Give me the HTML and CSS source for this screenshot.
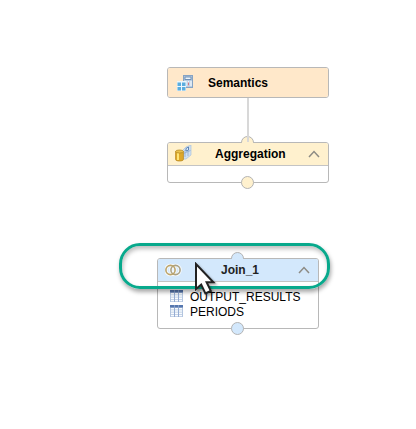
FILE: index.html
```
<!DOCTYPE html>
<html lang="en">
<head>
<meta charset="utf-8">
<title>Calculation view</title>
<link rel="stylesheet" href="styles.css">
</head>
<body>
<main class="canvas">
  <span class="connector"></span>
  <section class="node semantics">
    <header class="node-head">
      <svg class="icon" width="18" height="18" viewBox="0 0 18 18">
        <rect x="6.5" y="1.5" width="9" height="12" fill="#b9cde2" stroke="#86a3c4"/>
        <rect x="8" y="3" width="6" height="2.5" fill="#edf5fc" stroke="#587da9" stroke-width=".8"/>
        <path d="M9 7v5M11.5 7v5M14 7v5" stroke="#f1f6fa" stroke-width="1.3"/>
        <path d="M11.5 8.5v3" stroke="#cf7982"/>
        <path d="M0 7h9v10H0z" fill="#edf7fd"/>
        <path d="M.5 8.5H4V12H.5zM5 8.5h3.5V12H5zM.5 13H4v3.5H.5zM5 13h3.5v3.5H5z" fill="#5badde"/>
      </svg>
      <span class="name">Semantics</span>
    </header>
  </section>

  <section class="node aggregation">
    <i class="port top"></i>
    <header class="node-head">
      <svg class="icon" width="18" height="18" viewBox="0 0 18 18">
        <path d="M7 6l4-4 5-2v10l-5 4H7z" fill="#d0e0f0" stroke="#a9c2dc" stroke-width=".7"/>
        <path d="M10 5v7M13 5v6M8.5 8.5l7-3" stroke="#8eacd0" stroke-width=".8"/>
        <path d="M11 3.5l2.5-1.5v3L11 6z" fill="#e8f2fb" stroke="#5a83b4"/>
        <path d="M.6 6.5v8c0 2 7.8 2 7.8 0v-8z" fill="#dea82a" stroke="#b98a25" stroke-width=".8"/>
        <path d="M3 8v7" stroke="#ffe477" stroke-width="2"/>
        <ellipse cx="4.5" cy="6.5" rx="3.9" ry="1.5" fill="#e9c04e" stroke="#b68a20" stroke-width=".8"/>
      </svg>
      <span class="name">Aggregation</span>
      <svg class="chevron" width="12" height="8" viewBox="0 0 12 8"><path d="M1 7l5-5.5L11 7"/></svg>
    </header>
    <i class="port bottom"></i>
  </section>

  <section class="node join">
    <i class="port top"></i>
    <header class="node-head">
      <svg class="icon" width="18" height="14" viewBox="0 0 18 14">
        <g fill="none" stroke="#fff" stroke-width="3.4" opacity=".8"><circle cx="5.5" cy="7" r="4.6"/><circle cx="10.5" cy="7" r="4.6"/></g>
        <g fill="none" stroke-width="1.6"><circle cx="10.5" cy="7" r="4.6" stroke="#aaa285"/><circle cx="5.5" cy="7" r="4.6" stroke="#bca46a"/></g>
      </svg>
      <span class="name">Join_1</span>
      <svg class="chevron" width="12" height="8" viewBox="0 0 12 8"><path d="M1 7l5-5.5L11 7"/></svg>
    </header>
    <ul class="sources">
      <li>
        <svg width="13" height="12" viewBox="0 0 13 12"><path d="M0 0h13v12H0z" fill="#b3c5df"/><path d="M0 0h13v2.5H0z" fill="#5576ae"/><path d="M1 3h3v1.5H1zm4 0h3v1.5H5zm4 0h3v1.5H9zM1 5.3h3v1.5H1zm4 0h3v1.5H5zm4 0h3v1.5H9zM1 7.5h3V9H1zm4 0h3V9H5zm4 0h3V9H9zM1 9.8h3v1.5H1zm4 0h3v1.5H5zm4 0h3v1.5H9z" fill="#f8fbfe"/><path d="M4.5 0v12M8.5 0v12" stroke="#8ba6cf" stroke-width=".8"/></svg>
        <span>OUTPUT_RESULTS</span>
      </li>
      <li>
        <svg width="13" height="12" viewBox="0 0 13 12"><path d="M0 0h13v12H0z" fill="#b3c5df"/><path d="M0 0h13v2.5H0z" fill="#5576ae"/><path d="M1 3h3v1.5H1zm4 0h3v1.5H5zm4 0h3v1.5H9zM1 5.3h3v1.5H1zm4 0h3v1.5H5zm4 0h3v1.5H9zM1 7.5h3V9H1zm4 0h3V9H5zm4 0h3V9H9zM1 9.8h3v1.5H1zm4 0h3v1.5H5zm4 0h3v1.5H9z" fill="#f8fbfe"/><path d="M4.5 0v12M8.5 0v12" stroke="#8ba6cf" stroke-width=".8"/></svg>
        <span>PERIODS</span>
      </li>
    </ul>
    <i class="port bottom"></i>
  </section>

  <div class="highlight"></div>
  <svg class="cursor" width="24" height="36" viewBox="0 0 24 36">
    <path d="M2 2v25l5.2-4.4 4.2 8.8 5.4-2.5-4.2-8.7h6.8z" fill="#fff" stroke="#222" stroke-width="2"/>
  </svg>
</main>
</body>
</html>
```
FILE: styles.css
```
* { box-sizing: border-box; }

body {
  margin: 0;
  background: #fff;
  font-family: "Liberation Sans", Arial, sans-serif;
  font-size: 12px;
  color: #000;
}

.canvas {
  position: relative;
  width: 416px;
  height: 429px;
  overflow: hidden;
}

.connector {
  position: absolute;
  left: 247px;
  top: 98px;
  width: 2px;
  height: 44px;
  background: #d8d8d8;
  z-index: 1;
}

.node {
  position: absolute;
  width: 162px;
  border: 1px solid #b8b8b8;
  border-radius: 3px;
  background: #fff;
}

.semantics { left: 167px; top: 67px; height: 31px; }
.aggregation { left: 167px; top: 142px; height: 41px; }
.join { left: 157px; top: 258px; height: 71px; }

.node-head {
  position: relative;
  display: flex;
  align-items: center;
  height: 23px;
  padding: 0 8px 0 7px;
  border-bottom: 1px solid #c4c4c4;
  border-radius: 2px 2px 0 0;
}

.semantics .node-head {
  height: 29px;
  padding-left: 9px;
  border-bottom: 0;
  border-radius: 2px;
  background: #ffe8ca;
}
.aggregation .node-head { background: #fff1ce; }
.join .node-head { background: #d3e8fc; }

.icon { flex: none; }

.name {
  flex: 1;
  font-weight: bold;
  white-space: nowrap;
}
.semantics .name { padding-left: 13px; padding-top: 1px; }
.aggregation .name { padding-left: 22px; }
.join .name { padding-left: 38px; color: #222; }

.chevron {
  flex: none;
  fill: none;
  stroke: #8d8b84;
  stroke-width: 1.5;
}

.port {
  position: absolute;
  left: 73px;
  width: 13px;
  height: 13px;
  border: 1px solid #b4b4b4;
  border-radius: 50%;
  background: #fff1ce;
}
.join .port { background: #d3e8fc; }
.port.top { top: -7px; }
.port.bottom { bottom: -7px; }

.sources {
  list-style: none;
  margin: 0;
  padding: 7px 0 0 12px;
}
.sources li {
  display: flex;
  align-items: center;
  gap: 7px;
  height: 15px;
}
.sources svg { flex: none; position: relative; top: -1px; }

.highlight {
  position: absolute;
  left: 119px;
  top: 243px;
  width: 211px;
  height: 46px;
  border: 3px solid #08a98c;
  border-radius: 21px;
  box-shadow: 1px 3px 4px rgba(0, 0, 0, .35), inset 1px 3px 4px rgba(0, 0, 0, .25);
}

.cursor {
  position: absolute;
  left: 194px;
  top: 262px;
  filter: drop-shadow(2px 2px 1px rgba(0, 0, 0, .3));
}
```
